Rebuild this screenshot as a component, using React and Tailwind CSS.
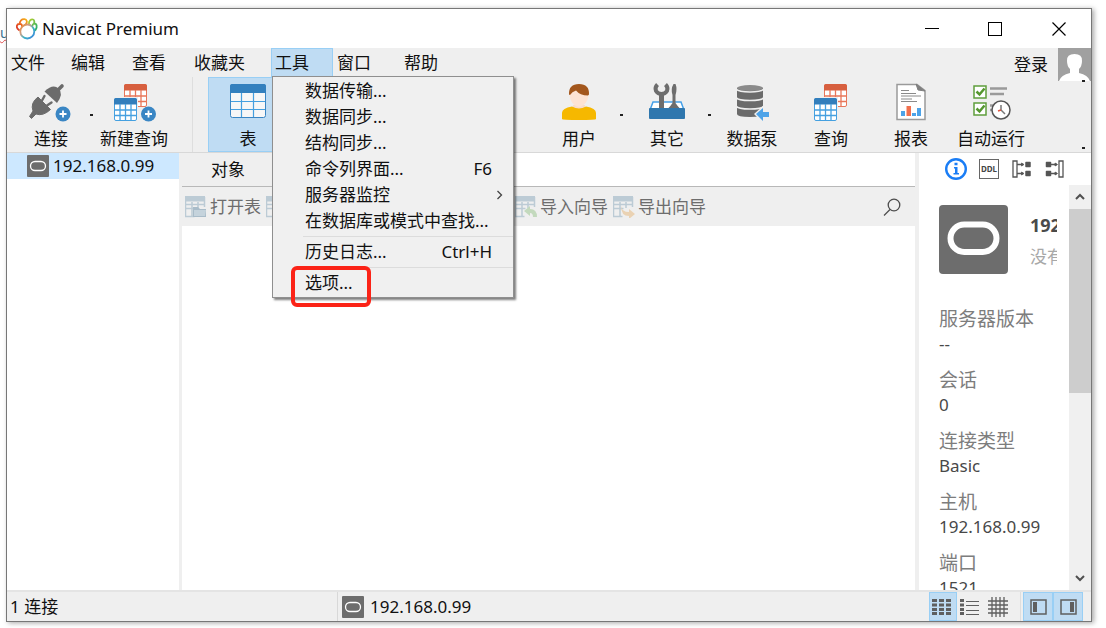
import { Fragment } from "react";

const menus = [
  { label: "文件", width: "w-[60px]" },
  { label: "编辑", width: "w-[61px]" },
  { label: "查看", width: "w-[62px]" },
  { label: "收藏夹", width: "w-[81px]" },
  { label: "工具", width: "w-[62px]", open: true },
  { label: "窗口", width: "w-[67px]" },
  { label: "帮助", width: "w-[61px]" },
];

const toolItems = [
  { label: "数据传输..." },
  { label: "数据同步..." },
  { label: "结构同步..." },
  { label: "命令列界面...", shortcut: "F6" },
  { label: "服务器监控", submenu: true },
  { label: "在数据库或模式中查找..." },
  { divider: true, label: "历史日志...", shortcut: "Ctrl+H" },
  { divider: true, label: "选项...", marked: true },
];

const details = [
  { label: "服务器版本", value: "--" },
  { label: "会话", value: "0" },
  { label: "连接类型", value: "Basic" },
  { label: "主机", value: "192.168.0.99" },
  { label: "端口", value: "1521" },
];

function Logo() {
  return (
    <svg className="h-[22px] w-[22px]" viewBox="0 0 22 22" fill="none" strokeWidth="1.800" strokeLinecap="round">
      <defs>
        <linearGradient id="ring" x1="0" y1="0" x2="1" y2="1">
          <stop offset="0" stopColor="#f08a2c" />
          <stop offset="0.35" stopColor="#c9a08a" />
          <stop offset="0.6" stopColor="#39b4c6" />
          <stop offset="1" stopColor="#3f7fe0" />
        </linearGradient>
        <linearGradient id="left" x1="0" y1="1" x2="1" y2="0">
          <stop offset="0" stopColor="#d8342c" />
          <stop offset="0.5" stopColor="#ee6a1e" />
          <stop offset="1" stopColor="#f5b41c" />
        </linearGradient>
        <linearGradient id="right" x1="0" y1="0" x2="1" y2="1">
          <stop offset="0" stopColor="#b9cf2a" />
          <stop offset="1" stopColor="#22ad73" />
        </linearGradient>
      </defs>
      <path d="M3 12 C0 10 0 6 3.500 6 C4 3 6 1 8.500 1.200 C11 1.500 11.500 4 10 6 M3.500 6 C5 5.500 6 6.500 6 8" stroke="url(#left)" />
      <path d="M13 6 C12.500 3 15 1 17 1.500 C18.500 2 18.500 4 18 5.500 C21 5.500 21.500 9 19.500 12 M18 5.500 C17 6 16.500 7 16.500 7.500" stroke="url(#right)" />
      <circle cx="11.300" cy="13.500" r="7" stroke="url(#ring)" />
    </svg>
  );
}

function Plus({ x, y }) {
  return (
    <g>
      <circle cx={x} cy={y} r="7.500" fill="#3a86c4" />
      <path d={`M${x - 3.5} ${y}h7M${x} ${y - 3.5}v7`} stroke="#fff" strokeWidth="1.800" />
    </g>
  );
}

function Grid({ x, y, head, line }) {
  return (
    <g>
      <rect x={x + 0.5} y={y + 0.5} width="22" height="22" rx="1.500" fill="#fff" stroke={line} />
      <path d={`M${x} ${y + 6.5}v-4.500q0-2 2-2h19q2 0 2 2v4.500z`} fill={head} />
      <path
        d={`M${x} ${y + 12}h23M${x} ${y + 17.5}h23M${x + 6} ${y + 6}v17M${x + 11.5} ${y + 6}v17M${x + 17} ${y + 6}v17`}
        stroke={line}
        strokeWidth="1.300"
      />
    </g>
  );
}

function ConnectIcon() {
  return (
    <svg className="h-10 w-11" viewBox="0 0 44 40">
      <path d="M29 7L33 3" stroke="#6b6b6b" strokeWidth="3.600" strokeLinecap="round" />
      <path d="M15.500 8.500Q24 .500 29.500 5.500T28 20z" fill="#6b6b6b" />
      <path d="M13 17.500l2.500-4.500M18 22.500l4.500-3" stroke="#6b6b6b" strokeWidth="2.400" strokeLinecap="round" />
      <path d="M9 14l12.500 12.500Q14 33.500 7 31L2.500 35.500l-2-2 3.500-5.500Q1 20 9 14z" fill="#6b6b6b" stroke="#6b6b6b" strokeLinejoin="round" />
      <Plus x={34} y={31} />
    </svg>
  );
}

function NewQueryIcon() {
  return (
    <svg className="h-10 w-11" viewBox="-2 0 44 40">
      <Grid x={10} y={1} head="#d75f3f" line="#e8775a" />
      <rect x="-1" y="14" width="25" height="25" fill="#efefef" />
      <Grid x={0} y={15} head="#327ebc" line="#45a0e0" />
      <Plus x={34.5} y={31} />
    </svg>
  );
}

function TableIcon() {
  return (
    <svg className="h-10 w-10" viewBox="0 0 40 40">
      <rect x="2.500" y="1.500" width="35" height="33" rx="2" fill="#f7f7f7" stroke="#3a86c4" />
      <path d="M2 10V3q0-2 2-2h32q2 0 2 2v7z" fill="#3380be" />
      <path d="M3 18.500h34M3 26.500h34M13.500 10v24M25.500 10v24" stroke="#45a0e0" strokeWidth="1.200" />
    </svg>
  );
}

function FunctionIcon() {
  return (
    <svg className="h-10 w-10" viewBox="0 0 40 40" fill="none" stroke="#5d5d5d" strokeWidth="2.500">
      <path d="M33 13 Q42 22 33 32M7 13 Q-2 22 7 32M15 17l11 12M26 17l-11 12" />
    </svg>
  );
}

function UserIcon() {
  return (
    <svg className="h-10 w-10" viewBox="0 0 40 40">
      <path d="M14 22h12v5l-6 4-6-4z" fill="#f8dccb" />
      <path d="M3 36v-6q0-5 10-6.500q7 4 14 0q10 1.500 10 6.500v6q0 1-17 1T3 36z" fill="#f6b800" />
      <path d="M10.500 11q0-8 9.500-8t9.500 8q0 7-5 11-4.500 4-9 0-5-4-5-11z" fill="#fde3d3" />
      <path d="M10 11.500Q9.500 1 20 1t10 10.500l-1 1q-8 0-12-5-4 1-6 4.500z" fill="#a3571d" />
    </svg>
  );
}

function ToolboxIcon() {
  return (
    <svg className="h-10 w-10" viewBox="0 0 40 40">
      <path d="M6 19h28l3 8H3z" fill="#fff" stroke="#45a0e8" strokeWidth="1.500" />
      <path d="M10.500 1.500q-3 3-1.500 6.500 2 3 5.500 3t5.500-3q1.500-3.500-1.500-6.500" fill="none" stroke="#6d6d6d" strokeWidth="4" />
      <path d="M12 10h5v16h-5z" fill="#6d6d6d" />
      <path d="M26.500 1q-3 5-1 11v8q-2 3-4 5h11q-2-2-4-5v-8q2-6 0-11z" fill="#6d6d6d" />
      <rect x="2" y="25" width="36" height="11" rx="1" fill="#2f77ae" />
    </svg>
  );
}

function PumpIcon() {
  return (
    <svg className="h-10 w-10" viewBox="0 0 40 40">
      <path d="M5 5v26q0 3 13 3t13-3V5z" fill="#6b6b6b" />
      <ellipse cx="18" cy="5" rx="13" ry="3" fill="#8b8b8b" />
      <path d="M4 6q3 3 14 3t14-3M4 14.500q2 3 14 3t14-3M4 23q2 3 14 3t14-3" fill="none" stroke="#efefef" strokeWidth="1.600" />
      <path d="M22 31l9-8 8 3v9l-9 4z" fill="#efefef" />
      <path d="M24 31l7-6v4h6v5h-6v4z" fill="#4da3e8" />
    </svg>
  );
}

function QueryIcon() {
  return (
    <svg className="h-10 w-[34px]" viewBox="0 0 34 40">
      <Grid x={10} y={1} head="#d75f3f" line="#e8775a" />
      <rect x="0" y="14" width="24" height="25" fill="#efefef" />
      <Grid x={0} y={15} head="#327ebc" line="#45a0e0" />
    </svg>
  );
}

function ReportIcon() {
  return (
    <svg className="h-10 w-[30px]" viewBox="0 0 30 40">
      <path d="M1 1.500h20l8 6v29H1z" fill="#fff" stroke="#9a9a9a" strokeWidth="1.500" />
      <path d="M20 1v0l9 7-7-1z" fill="#808080" stroke="#808080" />
      <path d="M5 7.500h8M5 10.500h15M5 13h20M5 16h11M5 18.500h16" stroke="#8a8a8a" />
      <path d="M5 28h4v5H5zM16 30h4v3h-4zM21 25h4v8h-4z" fill="#4da3e8" />
      <path d="M10.500 23h4.500v10h-4.500z" fill="#f2704e" />
    </svg>
  );
}

function AutomationIcon() {
  return (
    <svg className="h-10 w-10" viewBox="0 0 40 40" fill="none">
      <path d="M19 5.500h17M19 11h14" stroke="#9a9a9a" strokeWidth="2.500" />
      <path d="M19 22.500h4M19 27h3" stroke="#9a9a9a" strokeWidth="2.500" />
      <rect x="3" y="3" width="12" height="12" fill="#fff" stroke="#5f9e3c" strokeWidth="1.500" />
      <rect x="3" y="20" width="12" height="12" fill="#fff" stroke="#5f9e3c" strokeWidth="1.500" />
      <path d="M5.500 8.500l3 3 5-6M5.500 25.500l3 3 5-6" stroke="#55972f" strokeWidth="2.500" />
      <circle cx="30" cy="27" r="9" fill="#fff" stroke="#555" strokeWidth="1.500" />
      <path d="M30 22v5l4 4" stroke="#777" strokeWidth="1.500" />
      <path d="M30 27l-3 1" stroke="#e2523b" strokeWidth="1.500" />
    </svg>
  );
}

function Database({ className }) {
  return (
    <svg className={className} viewBox="0 0 22 22">
      <rect width="22" height="22" rx="1" fill="#6d6d6d" />
      <rect x="3.500" y="6.500" width="15" height="9" rx="4.500" fill="none" stroke="#fff" strokeWidth="1.300" />
    </svg>
  );
}

function SmallTable({ children }) {
  return (
    <svg className="h-[22px] w-[22px] shrink-0" viewBox="0 0 22 22" fill="none">
      <path d="M.500 1v19.500h9M19.500 1v10M.500 12.500h10M7 6v14M13 6v6M1 8.500h18" stroke="#bccbd5" strokeWidth="1.500" />
      <path d="M0 0h20v5.500H0z" fill="#bccbd5" />
      {children}
    </svg>
  );
}

function ToolButton({ label, icon, width, active }) {
  return (
    <button
      className={`flex shrink-0 flex-col items-center ${width} ${
        active ? "border border-[#99cff5] bg-[#bfdcf3] pt-[5px]" : "pt-1.5"
      }`}
    >
      {icon}
      <span className="mt-1 whitespace-nowrap leading-6">{label}</span>
    </button>
  );
}

function DropArrow({ label }) {
  return (
    <button aria-label={label} className="flex w-2 shrink-0 items-center justify-center">
      <span className="h-0.5 w-[3px] bg-[#222]" />
    </button>
  );
}

function ToolsMenu() {
  return (
    <div
      role="menu"
      className="absolute left-px top-[28px] z-20 w-[242px] border border-[#8f8f8f] bg-[#f0f0f0] py-px shadow-[2px_2px_2px_rgba(0,0,0,0.5)]"
    >
      {toolItems.map((item) => (
        <Fragment key={item.label}>
          {item.divider && (
            <div className="ml-[30px] flex h-[5px] items-center">
              <div className="h-px w-full bg-[#dcdcdc]" />
            </div>
          )}
          <button role="menuitem" className="relative flex h-[26px] w-full items-center justify-between pl-8 pr-[21px]">
            <span>{item.label}</span>
            {item.shortcut && <span>{item.shortcut}</span>}
            {item.submenu && (
              <svg className="-mr-3 h-3 w-2" viewBox="0 0 8 12" fill="none" stroke="#444" strokeWidth="1.300">
                <path d="M1.500 2l4 4-4 4" />
              </svg>
            )}
            {item.marked && (
              <span className="absolute -top-1 left-[18px] h-[41px] w-20 rounded-md border-4 border-[#fb2317]" />
            )}
          </button>
        </Fragment>
      ))}
    </div>
  );
}

function TitleBar() {
  return (
    <header className="flex h-[39px] shrink-0 items-center bg-white pl-[9px]">
      <Logo />
      <h1 className="ml-1 grow text-[17px]">Navicat Premium</h1>
      <button aria-label="最小化" className="flex h-full w-[62px] items-center justify-center">
        <span className="h-px w-3.5 bg-black" />
      </button>
      <button aria-label="最大化" className="flex h-full w-16 items-center justify-center">
        <span className="h-3.5 w-3.5 border border-black" />
      </button>
      <button aria-label="关闭" className="flex h-full w-16 items-center justify-center">
        <svg className="h-3.5 w-3.5" viewBox="0 0 14 14" stroke="#000" strokeWidth="1.200">
          <path d="M.500.500l13 13M13.500.500l-13 13" />
        </svg>
      </button>
    </header>
  );
}

function MenuBar() {
  return (
    <nav className="flex h-[29px] shrink-0 items-start">
      {menus.map((menu) => (
        <div key={menu.label} className={`relative h-full ${menu.width}`}>
          <button
            className={`flex h-full w-full items-center border pl-[3px] ${
              menu.open ? "border-[#99cff5] bg-[#bfdcf3]" : "border-transparent"
            }`}
          >
            {menu.label}
          </button>
          {menu.open && <ToolsMenu />}
        </div>
      ))}
      <a href="#login" className="ml-auto mr-2.5 mt-[5px] leading-6">
        登录
      </a>
      <svg className="h-[33px] w-[33px] shrink-0" viewBox="0 0 33 33">
        <rect width="33" height="33" fill="#a0a0a0" />
        <path d="M1 33q2-6 11-8v-4q-3-3-3-8-.500-7 7.500-7t7.500 7q0 5-3 8v4q9 2 11 8z" fill="#fff" />
      </svg>
    </nav>
  );
}

function Toolbar() {
  return (
    <div className="flex h-[76px] shrink-0 border-b border-[#d8d8d8] pl-2">
      <ToolButton label="连接" icon={<ConnectIcon />} width="w-[72px]" />
      <DropArrow label="连接选项" />
      <ToolButton label="新建查询" icon={<NewQueryIcon />} width="w-[78px]" />
      <div className="ml-[19px] mr-[15px] w-px shrink-0 bg-[#dedede]" />
      <ToolButton label="表" icon={<TableIcon />} width="w-20" active />
      <button aria-label="函数" className="ml-[187px] mr-[26px] flex w-10 shrink-0 justify-center pt-1.5">
        <FunctionIcon />
      </button>
      <ToolButton label="用户" icon={<UserIcon />} width="w-[76px]" />
      <DropArrow label="用户选项" />
      <ToolButton label="其它" icon={<ToolboxIcon />} width="ml-1 w-[76px]" />
      <DropArrow label="其它选项" />
      <ToolButton label="数据泵" icon={<PumpIcon />} width="w-[78px]" />
      <ToolButton label="查询" icon={<QueryIcon />} width="w-20" />
      <ToolButton label="报表" icon={<ReportIcon />} width="w-20" />
      <ToolButton label="自动运行" icon={<AutomationIcon />} width="w-20" />
      <div className="ml-auto mr-1.5 flex flex-col justify-between pb-[3px] pt-[3px]">
        <span className="h-0.5 w-[3px] bg-[#222]" />
        <span className="h-0.5 w-[3px] bg-[#222]" />
      </div>
    </div>
  );
}

function ObjectPane() {
  return (
    <main className="flex min-w-0 grow flex-col bg-white">
      <div className="flex h-[34px] shrink-0 border-b border-[#b8b8b8]">
        <button className="w-[300px] bg-[#efefef] pl-[29px] text-left">对象</button>
      </div>
      <div className="flex h-[39px] shrink-0 items-center bg-[#efefef] pl-[3px] text-[#6d6d6d]">
        <button className="flex items-center gap-[3px]">
          <SmallTable>
            <path d="M8 11h5l2 2h6v8H8z" fill="#a9bcc9" />
            <path d="M9 14h12l-1 6H9z" fill="#c5d3dc" />
          </SmallTable>
          打开表
        </button>
        <button aria-label="设计表" className="ml-[5px] w-[249px]">
          <SmallTable />
        </button>
        <button className="flex items-center gap-[3px]">
          <SmallTable>
            <path d="M9 15l6-5v3q7 0 7 8h-4q0-4-3-4v3z" fill="#c3d9bd" />
          </SmallTable>
          导入向导
        </button>
        <button className="ml-[5px] flex items-center gap-[3px]">
          <SmallTable>
            <path d="M8 10q1 6 8 6v-3l6 5-6 5v-3Q8 20 8 10z" fill="#ead2b3" />
          </SmallTable>
          导出向导
        </button>
        <button aria-label="搜索" className="ml-auto mr-3.5">
          <svg className="h-[18px] w-[18px]" viewBox="0 0 18 18" fill="none" stroke="#4d4d4d" strokeWidth="1.300">
            <circle cx="11" cy="7" r="5.800" />
            <path d="M7 11.500l-6 6" />
          </svg>
        </button>
      </div>
    </main>
  );
}

function InfoPane() {
  return (
    <aside className="flex w-[172px] shrink-0 flex-col bg-white">
      <div className="flex h-8 shrink-0 items-center pl-[26px]">
        <button aria-label="常规">
          <svg className="h-[22px] w-[22px]" viewBox="0 0 22 22">
            <circle cx="11" cy="11" r="9.800" fill="#fff" stroke="#1a7df5" strokeWidth="2.400" />
            <path d="M9.500 4.800h3v2.500h-3zM9 9h3.500v6H14v1.500H8.500V15H10v-4.500H9z" fill="#1a7df5" />
          </svg>
        </button>
        <button className="ml-3 flex h-5 w-5 items-center justify-center border border-[#666] text-[8px] font-bold text-[#444]">
          DDL
        </button>
        <button aria-label="使用" className="ml-[13px]">
          <svg className="h-5 w-5" viewBox="0 0 20 20" fill="none" stroke="#555" strokeWidth="1.300">
            <path d="M1 2h4v16H1zM5 5.500h6M5 14.500h6" />
            <path d="M9.500 4l2.500 1.500L9.500 7zM9.500 13l2.500 1.500L9.500 16z" fill="#555" strokeWidth=".8" />
            <path d="M14 3.500h4v4h-4zM14 12.500h4v4h-4z" fill="#555" strokeWidth="1.500" strokeLinejoin="round" />
          </svg>
        </button>
        <button aria-label="被使用" className="ml-[13px]">
          <svg className="h-5 w-5" viewBox="0 0 20 20" fill="none" stroke="#555" strokeWidth="1.300">
            <path d="M14 2h4v16h-4zM6 5.500h6M6 14.500h6" />
            <path d="M10 4l2.500 1.500L10 7zM10 13l2.500 1.500L10 16z" fill="#555" strokeWidth=".8" />
            <path d="M1.500 3.500h4v4h-4zM1.500 12.500h4v4h-4z" fill="#555" strokeWidth="1.500" strokeLinejoin="round" />
          </svg>
        </button>
      </div>
      <div className="flex min-h-0 grow">
        <div className="mr-3 min-w-0 grow overflow-hidden pl-5 pt-5">
          <div className="flex">
            <svg className="h-[69px] w-[69px] shrink-0" viewBox="0 0 69 69">
              <rect width="69" height="69" rx="4" fill="#6d6d6d" />
              <rect x="11.500" y="19.500" width="46" height="27.500" rx="13.750" fill="none" stroke="#fff" strokeWidth="6" />
            </svg>
            <div className="ml-[22px] whitespace-nowrap pt-1">
              <p className="text-lg leading-8 font-bold text-[#4a4a4a]">192.168.0.99</p>
              <p className="leading-8 text-[#a8a8a8]">没有注释</p>
            </div>
          </div>
          <dl className="mt-[33px]">
            {details.map((row) => (
              <div key={row.label} className="mb-3 text-[#484848]">
                <dt className="text-[19px] leading-[25px] text-[#7d7d7d]">{row.label}</dt>
                <dd className="leading-6">{row.value}</dd>
              </div>
            ))}
          </dl>
        </div>
        <div className="flex w-[22px] shrink-0 flex-col items-center bg-[#f0f0f0]">
          <button aria-label="向上" className="flex h-6 shrink-0 items-center">
            <svg className="h-2 w-2.5" viewBox="0 0 10 8" fill="none" stroke="#505050" strokeWidth="2">
              <path d="M1 6l4-4 4 4" />
            </svg>
          </button>
          <div className="h-[184px] w-full shrink-0 bg-[#cdcdcd]" />
          <button aria-label="向下" className="mt-auto flex h-6 shrink-0 items-center">
            <svg className="h-2 w-2.5" viewBox="0 0 10 8" fill="none" stroke="#505050" strokeWidth="2">
              <path d="M1 2l4 4 4-4" />
            </svg>
          </button>
        </div>
      </div>
    </aside>
  );
}

function StatusBar() {
  return (
    <footer className="flex h-[31px] shrink-0 border-t-2 border-[#e4e4e4]">
      <span className="flex w-[330px] items-center pl-[3px]">1 连接</span>
      <span className="flex grow items-center gap-1.5 border-l border-[#d8d8d8] pl-1">
        <Database className="h-[22px] w-[22px]" />
        192.168.0.99
      </span>
      <button aria-label="列表" className="flex w-7 items-center border border-[#99cff5] bg-[#bfdcf3] pl-0.5">
        <svg className="h-4 w-[19px]" viewBox="0 0 19 16" stroke="#5f5f5f" strokeWidth="3">
          <path d="M0 1.500h19M0 6h19M0 10.500h19M0 14.500h19" strokeDasharray="5 2" />
        </svg>
      </button>
      <button aria-label="详细信息" className="flex w-7 items-center pl-[3px]">
        <svg className="h-4 w-[19px]" viewBox="0 0 19 16" stroke="#5f5f5f">
          <path d="M0 1.500h4M0 6h4M0 10.500h4M0 14.500h4" strokeWidth="3" />
          <path d="M6 2.500h13M6 6.500h13M6 11.500h13M6 15.500h13" />
        </svg>
      </button>
      <button aria-label="ER 图表" className="mr-[7px] flex w-7 items-center pl-[3px]">
        <svg className="h-5 w-5" viewBox="0 0 20 20" stroke="#5f5f5f" strokeWidth="1.300">
          <path d="M0 4h20M0 8h20M0 12h20M0 16h20M4 0v20M8 0v20M12 0v20M16 0v20" />
        </svg>
      </button>
      <div className="mr-0.5 w-px bg-[#dedede]" />
      <button aria-label="导航窗格" className="flex w-[30px] items-center justify-center border border-[#99cff5] bg-[#bfdcf3]">
        <svg className="h-4 w-[17px]" viewBox="0 0 17 16">
          <rect x="1" y="1" width="15" height="14" fill="none" stroke="#5f5f5f" strokeWidth="1.500" />
          <path d="M3 3h4v10H3z" fill="#5f5f5f" />
        </svg>
      </button>
      <button aria-label="信息窗格" className="mr-2 flex w-[30px] items-center justify-center border border-[#99cff5] bg-[#bfdcf3]">
        <svg className="h-4 w-[17px]" viewBox="0 0 17 16">
          <rect x="1" y="1" width="15" height="14" fill="none" stroke="#5f5f5f" strokeWidth="1.500" />
          <path d="M10 3h4v10h-4z" fill="#5f5f5f" />
        </svg>
      </button>
    </footer>
  );
}

export default function App() {
  return (
    <div className="relative flex h-screen overflow-hidden bg-white pt-2 pr-[14px] pb-[6px] pl-[6px] font-['Noto_Sans','Noto_Sans_CJK_SC',sans-serif] text-[17px] text-[#111]">
      <span className="absolute left-0 top-[25px] w-1.5 text-sm leading-4 text-[#3d7390] underline decoration-[#e05050] decoration-wavy decoration-1">
        u
      </span>
      <div className="relative flex min-w-0 grow flex-col border border-[#777] bg-[#efefef] shadow-[2px_1px_5px_rgba(0,0,0,0.35)]">
        <TitleBar />
        <MenuBar />
        <Toolbar />
        <div className="flex min-h-0 grow">
          <nav className="w-[172px] shrink-0 bg-white">
            <button className="flex h-[26px] w-full items-center gap-1 bg-[#cde8ff] pl-5">
              <Database className="h-[22px] w-[22px]" />
              192.168.0.99
            </button>
          </nav>
          <div className="w-[3px] shrink-0" />
          <ObjectPane />
          <div className="w-1 shrink-0" />
          <InfoPane />
        </div>
        <StatusBar />
      </div>
    </div>
  );
}
